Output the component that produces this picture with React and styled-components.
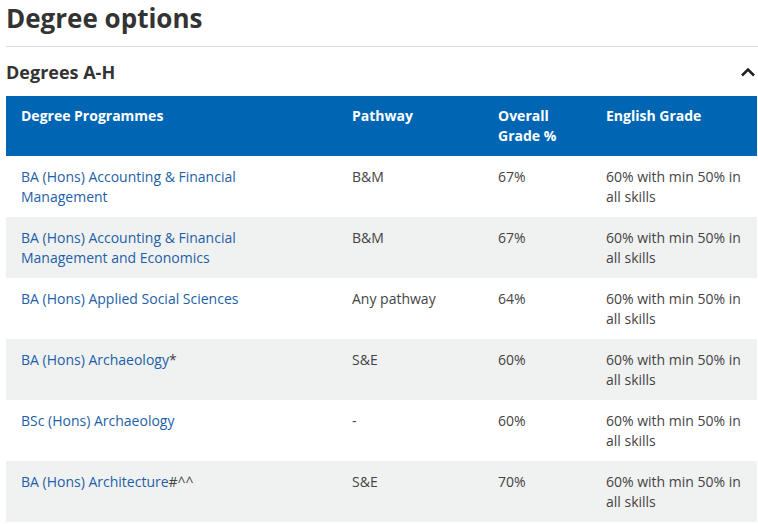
import React from "react";
import styled, { createGlobalStyle } from "styled-components";

const GlobalStyle = createGlobalStyle`
  body {
    margin: 0;
    background: #fff;
    font-family: "Open Sans", Arial, sans-serif;
    color: #444;
  }
`;

const rows = [
  { name: "BA (Hons) Accounting & Financial Management", pathway: "B&M", grade: "67%" },
  { name: "BA (Hons) Accounting & Financial Management and Economics", pathway: "B&M", grade: "67%" },
  { name: "BA (Hons) Applied Social Sciences", pathway: "Any pathway", grade: "64%" },
  { name: "BA (Hons) Archaeology", suffix: "*", pathway: "S&E", grade: "60%" },
  { name: "BSc (Hons) Archaeology", pathway: "-", grade: "60%" },
  { name: "BA (Hons) Architecture", suffix: "#^^", pathway: "S&E", grade: "70%" },
];

export default function App() {
  return (
    <>
      <GlobalStyle />
      <Page>
        <Title>Degree options</Title>
        <Divider />
        <SectionHeader>
          <h3>Degrees A-H</h3>
          <svg width="16" height="12" viewBox="0 0 16 12">
            <path d="M2 9.5 L8 3.5 L14 9.5" fill="none" stroke="#222" strokeWidth="2.6" />
          </svg>
        </SectionHeader>
        <Table>
          <colgroup>
            <col style={{ width: 331 }} />
            <col style={{ width: 146 }} />
            <col style={{ width: 108 }} />
            <col />
          </colgroup>
          <thead>
            <tr>
              <Th>Degree Programmes</Th>
              <Th>Pathway</Th>
              <Th>Overall Grade %</Th>
              <Th>English Grade</Th>
            </tr>
          </thead>
          <tbody>
            {rows.map((r, i) => (
              <Row key={i} $striped={i % 2 === 1}>
                <Td>
                  <Link href="#">{r.name}</Link>
                  {r.suffix}
                </Td>
                <Td>{r.pathway}</Td>
                <Td>{r.grade}</Td>
                <Td>60% with min 50% in all skills</Td>
              </Row>
            ))}
          </tbody>
        </Table>
      </Page>
    </>
  );
}

const Page = styled.div`
  padding: 0 1px 0 6px;
`;

const Title = styled.h1`
  margin: 0;
  padding-top: 1px;
  font-size: 26px;
  line-height: 34px;
  font-weight: 700;
  color: #333;
`;

const Divider = styled.hr`
  margin: 11px -1px 0 0;
  border: 0;
  border-top: 1px solid #dcdcdc;
`;

const SectionHeader = styled.div`
  display: flex;
  align-items: center;
  justify-content: space-between;
  height: 49px;
  h3 {
    margin: 0;
    font-size: 18px;
    font-weight: 700;
    color: #333;
  }
  svg {
    margin-right: 1px;
  }
`;

const Table = styled.table`
  width: 100%;
  border-collapse: collapse;
  table-layout: fixed;
  font-size: 14px;
  line-height: 20px;
`;

const Th = styled.th`
  background: #0066b3;
  color: #fff;
  font-weight: 700;
  text-align: left;
  vertical-align: top;
  padding: 10px 15px 10px;
`;

const Row = styled.tr`
  background: ${(p) => (p.$striped ? "#f0f1f1" : "#fff")};
`;

const Td = styled.td`
  vertical-align: top;
  padding: 11px 15px 10px;
  color: #444;
`;

const Link = styled.a`
  color: #1d5fa8;
  text-decoration: none;
`;
